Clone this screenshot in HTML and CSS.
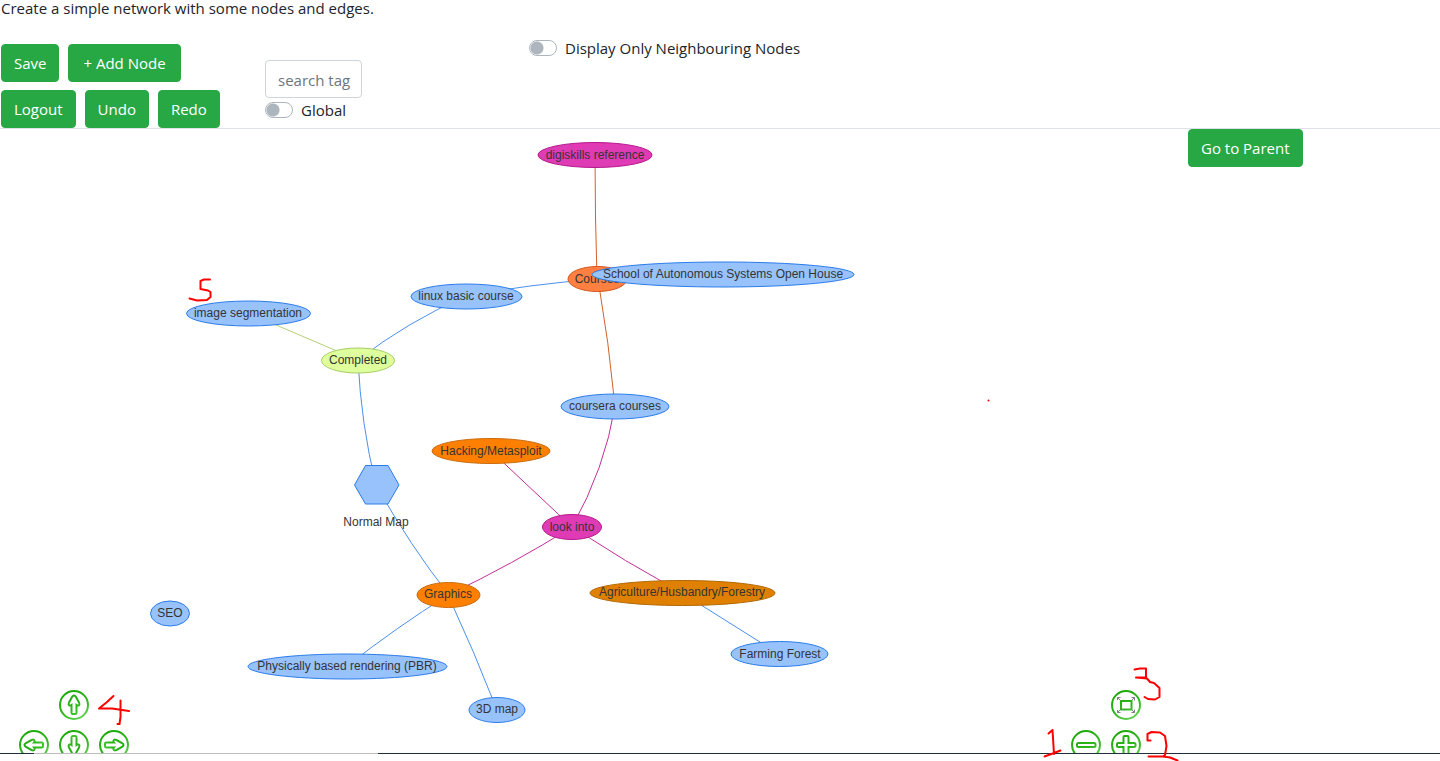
FILE: index.html
```html
<!DOCTYPE html>
<html lang="en">
<head>
<meta charset="utf-8">
<title>Network</title>
<link rel="stylesheet" href="styles.css">
</head>
<body>
<header class="header">
  <p class="intro">Create a simple network with some nodes and edges.</p>
  <div class="toolbar">
    <div class="actions">
      <div class="button-row">
        <button class="btn" type="button">Save</button>
        <button class="btn btn-wide" type="button">+ Add Node</button>
      </div>
      <div class="button-row">
        <button class="btn" type="button">Logout</button>
        <button class="btn" type="button">Undo</button>
        <button class="btn" type="button">Redo</button>
      </div>
    </div>
    <div class="search">
      <input class="search-input" type="text" placeholder="search tag" aria-label="search tag">
      <label class="switch"><input class="switch-input" type="checkbox">Global</label>
    </div>
    <div class="filter">
      <label class="switch"><input class="switch-input" type="checkbox">Display Only Neighbouring Nodes</label>
    </div>
  </div>
</header>
<main class="main">
  <section class="network" aria-label="Network">
    <svg class="graph">
      <g transform="translate(0 -129)">
        <g class="edges">
          <path class="edge-orange" d="M595 155Q595 217 597 279"/>
          <path class="edge-orange" d="M598 279Q609 343 615 406"/>
          <path class="edge-blue" d="M466 296Q532 284 598 279"/>
          <path class="edge-blue" d="M358 360Q407 322 466 296"/>
          <path class="edge-blue" d="M358 360Q361 424 376 485"/>
          <path class="edge-blue" d="M376 485Q411 547 449 595"/>
          <path class="edge-lime" d="M248 313L358 360"/>
          <path class="edge-pink" d="M615 406Q605 468 572 527"/>
          <path class="edge-pink" d="M491 451L572 527"/>
          <path class="edge-pink" d="M572 527Q513 564 448 595"/>
          <path class="edge-pink" d="M572 527Q624 561 682 593"/>
          <path class="edge-blue" d="M682 593L779 654"/>
          <path class="edge-blue" d="M448 595Q397 627 347 666"/>
          <path class="edge-blue" d="M448 595Q474 651 497 710"/>
        </g>
        <g class="node pink"><ellipse cx="595" cy="155" rx="57" ry="12.5"/><text x="595" y="159">digiskills reference</text></g>
        <g class="node coral"><ellipse cx="597.5" cy="279" rx="29.5" ry="12.5"/><text x="597" y="283">Courses</text></g>
        <g class="node blue"><ellipse cx="723" cy="274.5" rx="131" ry="12.5"/><text x="723" y="278">School of Autonomous Systems Open House</text></g>
        <g class="node blue"><ellipse cx="466.5" cy="296.5" rx="55.5" ry="12.5"/><text x="466" y="300">linux basic course</text></g>
        <g class="node blue"><ellipse cx="248.5" cy="313.5" rx="62" ry="12.5"/><text x="248" y="317">image segmentation</text></g>
        <g class="node lime"><ellipse cx="358" cy="360.5" rx="36.5" ry="12.5"/><text x="358" y="364">Completed</text></g>
        <g class="node blue"><ellipse cx="615" cy="406.5" rx="54" ry="12.5"/><text x="615" y="410">coursera courses</text></g>
        <g class="node orange"><ellipse cx="491" cy="451" rx="59" ry="12.5"/><text x="491" y="455">Hacking/Metasploit</text></g>
        <g class="node blue"><polygon points="354.5,485 365.5,465.5 388,465.5 399,485 388,504 365.5,504"/><text x="376" y="526">Normal Map</text></g>
        <g class="node pink"><ellipse cx="572" cy="527" rx="29.5" ry="12.5"/><text x="572" y="531">look into</text></g>
        <g class="node orange"><ellipse cx="448.5" cy="595" rx="31.5" ry="12.5"/><text x="448" y="598">Graphics</text></g>
        <g class="node amber"><ellipse cx="682.5" cy="593" rx="92.5" ry="12.5"/><text x="682" y="596">Agriculture/Husbandry/Forestry</text></g>
        <g class="node blue"><ellipse cx="779.5" cy="654" rx="48.5" ry="12.5"/><text x="780" y="658">Farming Forest</text></g>
        <g class="node blue"><ellipse cx="170" cy="613.5" rx="19.5" ry="12.5"/><text x="170" y="617">SEO</text></g>
        <g class="node blue"><ellipse cx="347.5" cy="666.5" rx="99.5" ry="12.5"/><text x="347" y="670">Physically based rendering (PBR)</text></g>
        <g class="node blue"><ellipse cx="497" cy="710" rx="28" ry="12.5"/><text x="497" y="713">3D map</text></g>
      </g>
    </svg>
    <svg class="defs" width="0" height="0" aria-hidden="true">
      <defs>
        <linearGradient id="green" gradientUnits="userSpaceOnUse" x1="8" y1="4" x2="22" y2="28"><stop offset="0" stop-color="#1fa90c"/><stop offset=".6" stop-color="#2fb81c"/><stop offset="1" stop-color="#5fd04e"/></linearGradient>
        <path id="arrow" d="M15 5.5Q16 5.500 17 7L20 12.500Q21 15 19.500 15.500Q18.500 15.800 17.500 15V22.500Q17.500 24 16.500 24H13.500Q12.500 24 12.500 22.500V15Q11.500 15.800 10.500 15.500Q9 15 10 12.500L13 7Q14 5.500 15 5.500Z"/>
      </defs>
    </svg>
    <div class="nav pan">
      <button class="nav-btn up" type="button" aria-label="Move up"><svg viewBox="0 0 30 30"><circle cx="15" cy="15" r="14"/><use href="#arrow"/></svg></button>
      <button class="nav-btn left" type="button" aria-label="Move left"><svg viewBox="0 0 30 30"><circle cx="15" cy="15" r="14"/><use href="#arrow" transform="rotate(-90 15 15)"/></svg></button>
      <button class="nav-btn down" type="button" aria-label="Move down"><svg viewBox="0 0 30 30"><circle cx="15" cy="15" r="14"/><use href="#arrow" transform="rotate(180 15 15)"/></svg></button>
      <button class="nav-btn right" type="button" aria-label="Move right"><svg viewBox="0 0 30 30"><circle cx="15" cy="15" r="14"/><use href="#arrow" transform="rotate(90 15 15)"/></svg></button>
    </div>
    <div class="nav zoom">
      <button class="nav-btn fit" type="button" aria-label="Zoom to fit"><svg viewBox="0 0 30 30"><circle cx="15" cy="15" r="14"/><rect x="10" y="11" width="10.5" height="8.5"/><path class="corner" d="M6.500 10V7.500H9.500M6.500 7.500L9.500 10.500M20.500 7.500H23.500V10.500M23.500 7.500L20.500 10.500M6.500 20V22.500H9.500M6.500 22.500L9.500 19.500M20.500 22.500H23.500V19.500M23.500 22.500L20.500 19.500"/></svg></button>
      <button class="nav-btn out" type="button" aria-label="Zoom out"><svg viewBox="0 0 30 30"><circle cx="15" cy="15" r="14"/><rect x="6" y="13" width="18.5" height="4" rx="1.5"/></svg></button>
      <button class="nav-btn in" type="button" aria-label="Zoom in"><svg viewBox="0 0 30 30"><circle cx="15" cy="15" r="14"/><path d="M13.500 6H16.500Q17.500 6 17.500 7V13H23Q24.500 13 24.500 14V16Q24.500 17 23 17H17.500V23Q17.500 24 16.500 24H13.500Q12.500 24 12.500 23V17H7Q6 17 6 16V14Q6 13 7 13H12.500V7Q12.500 6 13.500 6Z"/></svg></button>
    </div>
  </section>
  <aside class="side"><button class="btn" type="button">Go to Parent</button></aside>
</main>
<footer class="footer"></footer>
<svg class="ink" aria-hidden="true">
  <path d="M210 279.500L204 279.500L200.500 281L200.500 289L208 290.500L210.500 292L210.500 297L207 300L197 300.500L189.500 298.500"/>
  <path d="M113.500 696L107 702L99 708.500L112 708.500L129 711M120.500 700.500V717L119.500 724H117.500"/>
  <path d="M1134.500 669.500L1140 668.500H1146V677.500H1136L1147 678.500L1150 682L1154 683L1159.500 688V697L1155 699.500L1148 699L1144.500 697"/>
  <path d="M1048.500 733.500L1052.500 730L1054 754M1044.500 756.500L1054 753L1060.500 750.500"/>
  <path d="M1150.500 740.500H1147.500V734L1151.500 732L1160 732.500L1165 736L1166.500 746L1165 755L1163 756.500M1148.500 756.500H1163L1170 757.500L1177.500 760.500"/>
  <circle class="dot" cx="988.5" cy="400.5" r="1"/>
</svg>
</body>
</html>
```
FILE: styles.css
```css
* {
  box-sizing: border-box;
}

body {
  position: relative;
  display: flex;
  flex-direction: column;
  min-height: 100vh;
  margin: 0;
  background: #fff;
  color: #212529;
  font: 15px/24px "Open Sans", "Noto Sans", sans-serif;
}

.header {
  border-bottom: 1px solid #dee2e6;
}

.intro {
  margin: 0;
  padding: 0 0 2px 1px;
  line-height: 16px;
}

.toolbar {
  display: grid;
  grid-template-columns: 264px 264px 1fr;
  padding-left: 1px;
}

.actions {
  display: grid;
  gap: 8px;
  padding-top: 26px;
}

.button-row {
  display: flex;
  gap: 9px;
}

.btn {
  padding: 6px 12px;
  border: 1px solid #28a745;
  border-radius: 4px;
  background: #28a745;
  color: #fff;
  font: inherit;
  white-space: nowrap;
}

.btn-wide {
  padding: 6px 14px;
}

.search {
  padding-top: 42px;
}

.search-input {
  display: block;
  width: 97px;
  height: 38px;
  padding: 8px 6px 6px 12px;
  border: 1px solid #ced4da;
  border-radius: 4px;
  color: #495057;
  font: inherit;
}

.search-input::placeholder {
  color: #6c757d;
  opacity: 1;
}

.filter {
  padding-top: 18px;
}

.switch {
  display: flex;
  align-items: center;
  gap: 8px;
  width: max-content;
}

.switch-input {
  width: 28px;
  height: 16px;
  margin: 0;
  border: 1px solid #adb5bd;
  border-radius: 8px;
  appearance: none;
  background: radial-gradient(circle at 7px 7px, #adb5bd 6px, #fff 7px);
}

.switch-input:checked {
  background: radial-gradient(circle at 19px 7px, #fff 6px, #28a745 7px);
}

.main {
  display: grid;
  flex: 1;
  grid-template-columns: minmax(0, 1fr) 284px;
  min-height: 600px;
}

.network {
  position: relative;
  overflow: hidden;
}

.graph {
  position: absolute;
  width: 100%;
  height: 100%;
}

.defs {
  position: absolute;
}

.side {
  padding-left: 32px;
}

.edges path {
  fill: none;
  stroke-width: 1px;
}

.edge-blue { stroke: #4a90ec; }
.edge-orange { stroke: #d2622a; }
.edge-pink { stroke: #c22f98; }
.edge-lime { stroke: #b3cf78; }

.node text {
  fill: #343434;
  stroke: none;
  font: 12px "Liberation Sans", Arial, sans-serif;
  text-anchor: middle;
}

.blue { fill: #97c2fc; stroke: #2b7ce9; }
.pink { fill: #df3bb4; stroke: #b5178c; }
.coral { fill: #ff8040; stroke: #d2561a; }
.orange { fill: #ff8000; stroke: #c96a0c; }
.amber { fill: #e08000; stroke: #b3690b; }
.lime { fill: #deff9b; stroke: #a9cc66; }

.nav {
  position: absolute;
  bottom: -7px;
  display: grid;
  grid-template-rows: 30px 30px;
  gap: 10px;
}

.pan {
  left: 19px;
  grid-template-columns: 30px 30px 30px;
  grid-template-areas: ". up ." "left down right";
}

.zoom {
  right: 15px;
  grid-template-columns: 30px 30px;
  grid-template-areas: ". fit" "out in";
}

.nav-btn {
  padding: 0;
  border: 0;
  background: none;
}

.nav-btn svg {
  display: block;
  fill: none;
  stroke: url(#green);
  stroke-width: 2;
}

.nav-btn .corner {
  stroke: #808080;
  stroke-width: 1;
}

.up { grid-area: up; }
.left { grid-area: left; }
.down { grid-area: down; }
.right { grid-area: right; }
.fit { grid-area: fit; }
.out { grid-area: out; }
.in { grid-area: in; }

.footer {
  height: 8px;
  background: linear-gradient(90deg, #212f3a 34px, #bcbcbc 34px 378px, #212f3a 378px) top / 100% 1px no-repeat;
}

.ink {
  position: absolute;
  inset: 0;
  width: 100%;
  height: 100%;
  fill: none;
  stroke: #fe0000;
  stroke-width: 2;
  stroke-linecap: round;
  stroke-linejoin: round;
  pointer-events: none;
}

.ink .dot {
  fill: #fe0000;
  stroke: none;
}
```
